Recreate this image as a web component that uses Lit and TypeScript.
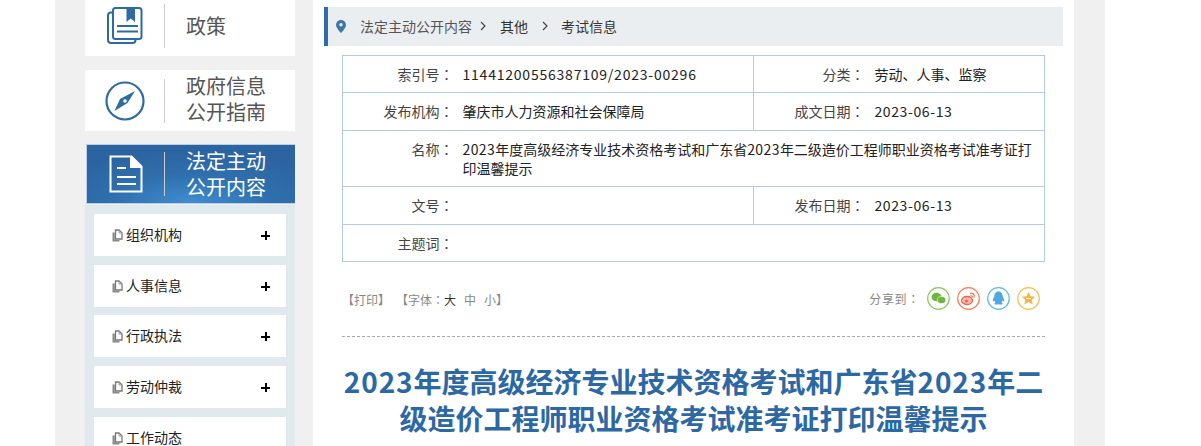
import { LitElement, html, css, svg } from "lit";
import { customElement } from "lit/decorators.js";

const fileIcon = svg`<svg class="mi" width="11" height="13" viewBox="0 0 11 13"><path d="M3.500 1h3.500l3 3v6H3.500z" fill="none" stroke="#777" stroke-width="1.300"/><path d="M7 1v3h3" fill="none" stroke="#999" stroke-width="1"/><path d="M.5 3.500h2.300v7.200h4.700v1.800H.5z" fill="#8a8a8a"/></svg>`;
const menu = ["组织机构", "人事信息", "行政执法", "劳动仲裁", "工作动态"];
const colon = html`<span class="c">：</span>`;

@customElement("app-root")
export class AppRoot extends LitElement {
  static styles = css`
    :host { display: block; height: 446px; overflow: hidden; background: #fff; font-family: "Noto Sans CJK SC", "Liberation Sans", sans-serif; }
    .c { font-family: "Noto Sans CJK TC", sans-serif; }
    .wrap { width: 1050px; height: 446px; margin-left: 55px; background: #f0f0f0; display: flex; overflow: hidden; padding: 0 31px 0 30px; box-sizing: border-box; }
    .side { width: 210px; flex: none; margin-top: -5px; display: flex; flex-direction: column; }
    .nav { height: 61px; background: #fff; display: flex; align-items: center; color: #555; font-size: 20px; line-height: 26px; margin-bottom: 14px; flex: none; box-sizing: border-box; }
    .nav.two { margin-bottom: 13px; }
    .nav.two .tx { margin-top: -3px; }
    .nav.on { width: 209px; margin-left: 1px; margin-bottom: 0; color: #fff; height: 60px; border: 1px solid #b9cfe6; border-right-width: 0; background: radial-gradient(ellipse 70% 90% at 50% 100%, #3f8dd0 0%, #2f6fad 55%, #2c64a1 100%); }
    .ic { width: 79px; display: flex; justify-content: center; flex: none; box-sizing: border-box; }
    .on .ic { width: 77px; }
    .bar { width: 1px; height: 44px; background: #ccc; margin-right: 21px; flex: none; }
    .panel { background: #dfe9ee; padding: 9px 9px 0; flex: 1; display: flex; flex-direction: column; gap: 9px; margin-top: 1px; }
    .item { height: 42px; flex: none; background: #fff; display: flex; align-items: center; padding: 0 16px 0 18px; font-size: 14px; color: #222; }
    .item:nth-child(3) { margin-top: -1px; }
    .mi { margin-right: 3px; flex: none; }
    .item span { flex: 1; margin-top: -2px; }
    .plus { width: 9px; height: 9px; flex: none; margin-top: 1px; background: linear-gradient(#000,#000) center/9px 2px no-repeat, linear-gradient(#000,#000) center/2px 9px no-repeat; }
    .main { width: 761px; margin-left: 18px; background: #fff; padding: 7px 11px 0; box-sizing: border-box; flex: none; }
    .crumb { height: 39px; box-sizing: border-box; background: #ebeef1; border-left: 4px solid #2e6da8; display: flex; align-items: center; font-size: 14px; color: #333; padding: 0 0 1px 8px; }
    .crumb .pin { margin-right: 14px; }
    .crumb .first { color: #555; }
    .chev { margin: 0 14px 0 8px; flex: none; }
    .chev.b { margin: 0 13px 0 14px; }
    .body { padding: 9px 18px 0; }
    table { border-collapse: collapse; table-layout: fixed; width: 703px; font-size: 14px; color: #333; }
    td { border: 1px solid #b2cde3; padding: 0; line-height: 19px; }
    td.l { text-align: right; color: #444; border-right: 0; }
    td.v { padding-left: 9px; color: #222; border-left: 0; }
    td.e { padding-left: 10px; }
    td.w { padding: 0 10px 0 9px; }
    td.top { vertical-align: top; padding-top: 9px; }
    .n { letter-spacing: 0.78px; }
    .d { letter-spacing: 0.6px; }
    .y { letter-spacing: 0.4px; }
    .r1 { height: 37px; } .r2 { height: 38px; } .r3 { height: 56px; }
    .tools { height: 74px; display: flex; align-items: center; font-size: 12px; color: #888; border-bottom: 1px dashed #aaa; }
    .tools .dk { color: #333; }
    .tools .sp { margin-left: 6px; }
    .tools .gap { margin-left: 8px; }
    .share { margin-left: auto; display: flex; align-items: center; margin-right: 5px; gap: 7px; margin-top: -2px; }
    .share b { font-weight: 400; letter-spacing: 0.7px; }
    h1 { margin: 26px 0 0; text-align: center; font-size: 28px; line-height: 37px; font-weight: 700; color: #2c68a4; }
    h1 span { letter-spacing: 0.9px; }
  `;

  render() {
    return html`<div class="wrap">
      <aside class="side">
        <div class="nav"><div class="ic">
          <svg width="36" height="37" viewBox="0 0 36 37" fill="none" stroke="#2e6ba3" stroke-width="2"><path d="M6 5.500H4a3 3 0 0 0-3 3V33a3 3 0 0 0 3 3h21.500a3 3 0 0 0 3-3"/><rect x="6" y="1" width="28.500" height="31" rx="2.500"/><path d="M19.500 1h8.500v14l-4.250-3.500L19.500 15z" fill="#2e6ba3" stroke="none"/><path d="M10 19h21M10 24.500h21"/></svg>
        </div><div class="bar"></div><div class="tx">政策</div></div>
        <div class="nav two"><div class="ic">
          <svg width="40" height="40" viewBox="0 0 40 40"><circle cx="20" cy="20" r="18.500" fill="none" stroke="#2e6ba3" stroke-width="2.200"/><path d="M30 10L15 18l-5.500 12 13-8z" fill="#2e6ba3"/><circle cx="20" cy="20" r="1.800" fill="#fff"/></svg>
        </div><div class="bar"></div><div class="tx">政府信息<br />公开指南</div></div>
        <div class="nav on"><div class="ic">
          <svg width="34" height="38" viewBox="0 0 34 38" fill="none" stroke="#fff" stroke-width="2"><path d="M1.500 1.500h21l10 10v25h-31z"/><path d="M22 1.500v10.500h10.500" fill="#fff"/><path d="M8 13h9M8 22h19M8 29h19"/></svg>
        </div><div class="bar"></div><div class="tx">法定主动<br />公开内容</div></div>
        <div class="panel">
          ${menu.map((m, i) => html`<div class="item">${fileIcon}<span>${m}</span>${i < 4 ? html`<i class="plus"></i>` : ""}</div>`)}
        </div>
      </aside>
      <main class="main">
        <nav class="crumb">
          <svg class="pin" width="10" height="13" viewBox="0 0 10 13"><path d="M5 0a5 5 0 0 1 5 5C10 8 5 13 5 13S0 8 0 5A5 5 0 0 1 5 0z" fill="#3a76a8"/><circle cx="5" cy="4.800" r="1.700" fill="#ebeef1"/></svg>
          <span class="first">法定主动公开内容</span>
          <svg class="chev" width="6" height="10" viewBox="0 0 6 10" fill="none" stroke="#444" stroke-width="1.200"><path d="M1 1l4 4-4 4"/></svg>
          <span>其他</span>
          <svg class="chev b" width="6" height="10" viewBox="0 0 6 10" fill="none" stroke="#444" stroke-width="1.200"><path d="M1 1l4 4-4 4"/></svg>
          <span>考试信息</span>
        </nav>
        <div class="body">
          <table>
            <colgroup><col style="width:111px" /><col style="width:300px" /><col style="width:111px" /><col style="width:180px" /></colgroup>
            <tr class="r1"><td class="l">索引号${colon}</td><td class="v"><span class="n">11441200556387109/2023-00296</span></td><td class="l">分类${colon}</td><td class="v e">劳动、人事、监察</td></tr>
            <tr class="r2"><td class="l">发布机构${colon}</td><td class="v">肇庆市人力资源和社会保障局</td><td class="l">成文日期${colon}</td><td class="v e"><span class="d">2023-06-13</span></td></tr>
            <tr class="r3"><td class="l top">名称${colon}</td><td class="v w" colspan="3"><span class="y">2023</span>年度高级经济专业技术资格考试和广东省<span class="y">2023</span>年二级造价工程师职业资格考试准考证打印温馨提示</td></tr>
            <tr class="r2"><td class="l">文号${colon}</td><td class="v"></td><td class="l">发布日期${colon}</td><td class="v e"><span class="d">2023-06-13</span></td></tr>
            <tr class="r1"><td class="l">主题词${colon}</td><td class="v" colspan="3"></td></tr>
          </table>
          <div class="tools">
            <span>【打印】</span><span class="sp">【字体${colon}<span class="dk">大</span><span class="gap">中</span><span class="gap">小</span>】</span>
            <div class="share"><b>分享到${colon}</b>
              <svg width="23" height="23" viewBox="0 0 23 23"><circle cx="11.500" cy="11.500" r="10.800" fill="none" stroke="#8bc85f" stroke-width="1.200"/><ellipse cx="9.500" cy="10" rx="5" ry="4.300" fill="#6fb53f"/><ellipse cx="14.500" cy="13" rx="4.200" ry="3.500" fill="#6fb53f" stroke="#fff" stroke-width=".6"/></svg>
              <svg width="23" height="23" viewBox="0 0 23 23"><circle cx="11.500" cy="11.500" r="10.800" fill="none" stroke="#ff7b4f" stroke-width="1.200"/><ellipse cx="10" cy="13.500" rx="5.500" ry="4" fill="#fbb" stroke="#f2603a" stroke-width="1.300"/><circle cx="9.500" cy="14" r="1.500" fill="#f2603a"/><path d="M13 6.500c3-1 5 1 4 4M13.500 8.800c1.500-.4 2 .5 1.700 1.700" fill="none" stroke="#f2603a" stroke-width="1.100"/></svg>
              <svg width="23" height="23" viewBox="0 0 23 23"><circle cx="11.500" cy="11.500" r="10.800" fill="none" stroke="#5db7ec" stroke-width="1.200"/><path d="M11.500 4.500c3 0 4.200 2.500 4.200 5 1 1.700 2 3.700 1.300 4.700-.4.400-1-.3-1.500-1 0 1.300-.5 2-1 2.500 1 .4 1.500 1 .8 1.500-1 .5-3 .5-3.800 0-.8.500-2.800.5-3.800 0-.7-.5-.2-1.100.8-1.500-.5-.5-1-1.200-1-2.500-.5.7-1.100 1.400-1.500 1-.7-1 .3-3 1.300-4.700 0-2.500 1.200-5 4.200-5z" fill="#4fa8e2"/></svg>
              <svg width="23" height="23" viewBox="0 0 23 23"><circle cx="11.500" cy="11.500" r="10.800" fill="none" stroke="#fbbd4a" stroke-width="1.200"/><path d="M11.500 5l2 4.300 4.600.5-3.400 3.100 1 4.600-4.200-2.400-4.200 2.400 1-4.600-3.400-3.100 4.600-.5z" fill="#f9b440"/><path d="M9 11.500h5" stroke="#fff" stroke-width="1"/></svg>
            </div>
          </div>
          <h1><span>2023</span>年度高级经济专业技术资格考试和广东省<span>2023</span>年二级造价工程师职业资格考试准考证打印温馨提示</h1>
        </div>
      </main>
    </div>`;
  }
}
